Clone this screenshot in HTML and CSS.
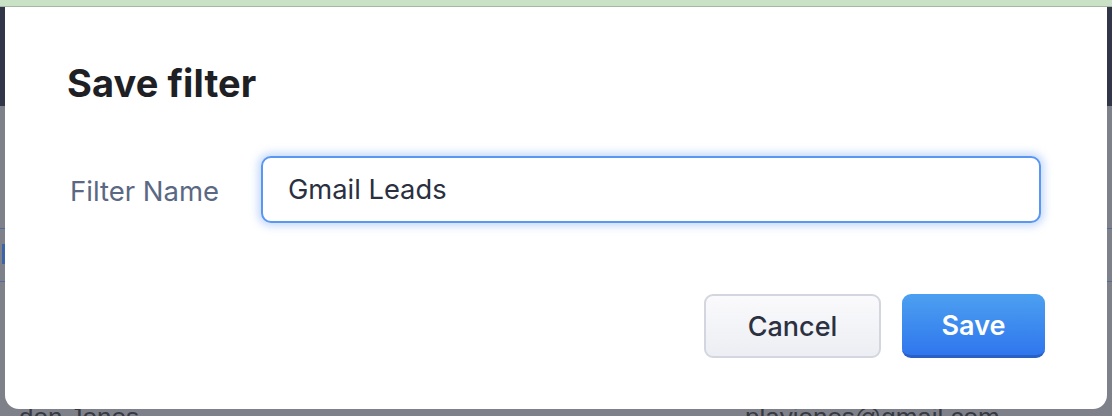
FILE: index.html
```html
<!DOCTYPE html>
<html lang="en">
<head>
<meta charset="utf-8">
<title>Save filter</title>
<link rel="stylesheet" href="styles.css">
</head>
<body>
<div class="app">
  <div class="greenbar"></div>
  <div class="navbar"></div>
  <div class="content">
    <div class="spacer-a"></div>
    <div class="tabs"><span class="tab-active"></span></div>
    <div class="spacer-b"></div>
  </div>
  <div class="row">
    <span class="cell-name">don Jones</span>
    <span class="cell-email">playjones@gmail.com</span>
  </div>
</div>

<div class="modal" role="dialog" aria-labelledby="dlg-title">
  <h1 class="modal-title" id="dlg-title">Save filter</h1>
  <div class="field">
    <label class="field-label" for="fname">Filter Name</label>
    <input class="field-input" id="fname" type="text" value="Gmail Leads">
  </div>
  <div class="actions">
    <button class="btn btn-cancel" type="button">Cancel</button>
    <button class="btn btn-save" type="button">Save</button>
  </div>
</div>
</body>
</html>
```

FILE: styles.css
```css
* { box-sizing: border-box; }

html, body {
  margin: 0;
  padding: 0;
  width: 1112px;
  height: 416px;
  overflow: hidden;
}

body {
  background: #7e818a;
  font-family: Inter, "Noto Sans", sans-serif;
}

.app {
  display: flex;
  flex-direction: column;
}

.greenbar {
  height: 7px;
  background: #c9e2c6;
  border-bottom: 1px solid #a6b8a3;
}

.navbar {
  height: 99px;
  background: #313649;
}

.content {
  display: flex;
  flex-direction: column;
}

.spacer-a {
  height: 122px;
}

.tabs {
  height: 54px;
  border-top: 1px solid #4f6c9c;
  border-bottom: 1px solid #4f6c9c;
  padding: 15px 0 0 2px;
}

.tab-active {
  display: block;
  width: 4px;
  height: 20px;
  background: #3d63a8;
}

.spacer-b {
  height: 120px;
}

.row {
  display: flex;
  height: 30px;
  font-family: "Liberation Sans", Arial, sans-serif;
  font-size: 26px;
  line-height: 30px;
  color: #363941;
}

.cell-name {
  padding-left: 19px;
  width: 745px;
}

.modal {
  position: absolute;
  top: 7px;
  left: 5px;
  width: 1102px;
  height: 402px;
  background: #ffffff;
  border-radius: 0 0 14px 14px;
  padding: 53px 62px 0 62px;
  display: flex;
  flex-direction: column;
}

.modal-title {
  margin: 0;
  font-size: 38px;
  line-height: 46px;
  font-weight: 700;
  color: #1e2023;
  letter-spacing: 0.1px;
}

.field {
  margin-top: 50px;
  display: flex;
  align-items: center;
  padding-right: 4px;
}

.field-label {
  width: 194px;
  flex: none;
  padding: 3px 0 0 3px;
  font-size: 27.5px;
  color: #5b6883;
}

.field-input {
  flex: 1;
  height: 67px;
  margin: 0;
  padding: 0 0 0 25px;
  border: 2px solid #5a97f0;
  border-radius: 10px;
  box-shadow: 0 0 9px 3px rgba(100, 152, 245, 0.38);
  outline: none;
  background: #fff;
  font-family: Inter, "Noto Sans", sans-serif;
  font-size: 27.3px;
  color: #2b3041;
}

.actions {
  margin-top: 71px;
  display: flex;
  justify-content: flex-end;
  gap: 21px;
}

.btn {
  height: 64px;
  margin: 0;
  border-radius: 9px;
  font-family: Inter, "Noto Sans", sans-serif;
  font-size: 27px;
  cursor: pointer;
}

.btn-cancel {
  width: 177px;
  background: linear-gradient(#fafafc, #eceef3);
  border: 2px solid #d4d6df;
  color: #2c3141;
  font-weight: 500;
}

.btn-save {
  width: 143px;
  background: linear-gradient(#4ca0f0, #2f76ee);
  border: none;
  border-bottom: 3px solid #2a60c4;
  color: #ffffff;
  font-weight: 600;
  padding-top: 2px;
}
```
